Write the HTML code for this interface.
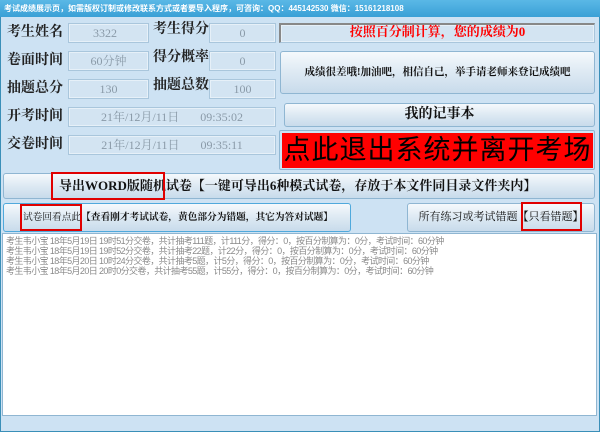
<!DOCTYPE html>
<html><head><meta charset="utf-8"><style>
*{margin:0;padding:0;box-sizing:border-box}
body{width:600px;height:432px;overflow:hidden;background:#4aa3cf;font-family:"Liberation Serif","Noto Serif CJK SC",serif;position:relative}
.win{position:absolute;left:0;top:0;width:600px;height:432px;background:#cde2f3;border:1px solid #3a8fb8}
.title{position:absolute;left:0;top:0;width:600px;height:17px;background:linear-gradient(#5ab8e6,#3aa0d6);color:#fff;font:bold 8px "Liberation Sans","Noto Sans CJK SC",sans-serif;line-height:17px;padding-left:4px;white-space:nowrap}
.a{position:absolute;white-space:nowrap}
.lab{font-size:14px;font-weight:bold;color:#222;line-height:20px}
.inp{background:#d3e4f2;border:1px solid #a9c6dc;box-shadow:inset 0 0 0 1px #e6f0f8;color:#8a9aa8;font-size:12px;text-align:center;line-height:18px}
.btn{background:linear-gradient(#f5f9fc,#dde9f3 50%,#c8dbeb);border:1px solid #8fb6d2;border-radius:3px;text-align:center;color:#111;font-weight:bold}
.red{border:2px solid #e00000}
.log{position:absolute;left:2px;top:233px;width:595px;height:183px;background:#fff;border:1px solid #8fb6d2;color:#8a8a8a;font:9px "Liberation Sans","Noto Sans CJK SC",sans-serif;line-height:10px;padding:2px 0 0 3px;white-space:pre;letter-spacing:-0.6px}
</style></head><body>
<div class="win"></div>
<div class="title">考试成绩展示页，如需版权订制或修改联系方式或者要导入程序，可咨询：QQ：445142530 微信：15161218108</div>

<div class="a lab" style="left:7px;top:23px">考生姓名</div>
<div class="a inp" style="left:68px;top:23px;width:81px;height:20px;text-align:left;padding-left:24px">3322</div>
<div class="a lab" style="left:153px;top:20px">考生得分</div>
<div class="a inp" style="left:209px;top:23px;width:67px;height:20px">0</div>
<div class="a inp" style="left:279px;top:23px;width:316px;height:20px;color:#f00;font-weight:bold;font-size:13px;line-height:14px;border-top:2px solid #888;border-left:2px solid #888">按照百分制计算，您的成绩为0</div>

<div class="a lab" style="left:7px;top:51px">卷面时间</div>
<div class="a inp" style="left:68px;top:51px;width:81px;height:20px">60分钟</div>
<div class="a lab" style="left:153px;top:48px">得分概率</div>
<div class="a inp" style="left:209px;top:51px;width:67px;height:20px">0</div>
<div class="a btn" style="left:280px;top:51px;width:315px;height:43px;font-size:10.5px;line-height:41px">成绩很差哦!加油吧，相信自己，举手请老师来登记成绩吧</div>

<div class="a lab" style="left:7px;top:79px">抽题总分</div>
<div class="a inp" style="left:68px;top:79px;width:81px;height:20px">130</div>
<div class="a lab" style="left:153px;top:76px">抽题总数</div>
<div class="a inp" style="left:209px;top:79px;width:67px;height:20px">100</div>

<div class="a lab" style="left:7px;top:107px">开考时间</div>
<div class="a inp" style="left:68px;top:107px;width:208px;height:20px;word-spacing:18px">21年/12月/11日 09:35:02</div>
<div class="a btn" style="left:284px;top:103px;width:311px;height:24px;font-size:14px;line-height:22px">我的记事本</div>

<div class="a lab" style="left:7px;top:135px">交卷时间</div>
<div class="a inp" style="left:68px;top:135px;width:208px;height:20px;word-spacing:18px">21年/12月/11日 09:35:11</div>
<div class="a" style="left:279px;top:130px;width:316px;height:40px;border:1px solid #8fb6d2;border-radius:2px"></div>
<div class="a" style="left:282px;top:133px;width:311px;height:35px;background:#f00;color:#000;font:27px 'Liberation Sans','Noto Sans CJK SC',sans-serif;line-height:34px;text-align:center;letter-spacing:1px">点此退出系统并离开考场</div>

<div class="a btn" style="left:3px;top:173px;width:592px;height:26px;font-size:13px;line-height:24px;text-align:left;padding-left:55px">导出WORD版随机试卷【一键可导出6种模式试卷，存放于本文件同目录文件夹内】</div>
<div class="a red" style="left:51px;top:172px;width:114px;height:28px"></div>

<div class="a btn" style="left:3px;top:203px;width:348px;height:29px;font-size:9.7px;line-height:27px;font-weight:normal;border-color:#4fa9dc;text-align:left;padding-left:19px">试卷回看点此<b>【查看刚才考试试卷，黄色部分为错题，其它为答对试题】</b></div>
<div class="a red" style="left:20px;top:204px;width:62px;height:27px"></div>
<div class="a btn" style="left:407px;top:203px;width:188px;height:29px;font-size:11px;line-height:27px;font-weight:normal">所有练习或考试错题<b>【</b>只看错题<b>】</b></div>
<div class="a red" style="left:521px;top:202px;width:61px;height:29px"></div>

<div class="log">考生韦小宝 18年5月19日 19时51分交卷，共计抽考111题，计111分，得分：0，按百分制算为：0分，考试时间：60分钟
考生韦小宝 18年5月19日 19时52分交卷，共计抽考22题，计22分，得分：0，按百分制算为：0分，考试时间：60分钟
考生韦小宝 18年5月20日 10时24分交卷，共计抽考5题，计5分，得分：0，按百分制算为：0分，考试时间：60分钟
考生韦小宝 18年5月20日 20时0分交卷，共计抽考55题，计55分，得分：0，按百分制算为：0分，考试时间：60分钟</div>
</body></html>
